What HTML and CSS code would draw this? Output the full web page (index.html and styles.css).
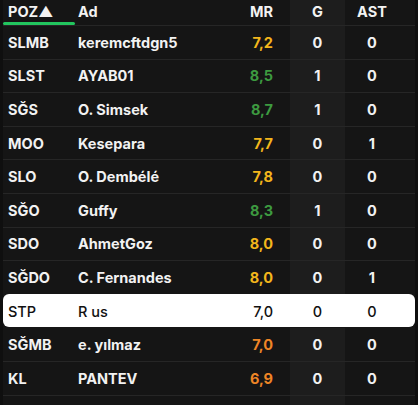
FILE: index.html
```html
<!DOCTYPE html>
<html lang="tr">
<head>
<meta charset="utf-8">
<link rel="stylesheet" href="styles.css">
</head>
<body>
<div class="table">
  <div class="row head">
    <div class="c poz"><span class="sorted">POZ▲</span></div>
    <div class="c ad">Ad</div>
    <div class="c mr">MR</div>
    <div class="c g">G</div>
    <div class="c ast">AST</div>
  </div>
  <div class="row"><div class="c poz">SLMB</div><div class="c ad">keremcftdgn5</div><div class="c mr yellow">7,2</div><div class="c g">0</div><div class="c ast">0</div></div>
  <div class="row"><div class="c poz">SLST</div><div class="c ad">AYAB01</div><div class="c mr green">8,5</div><div class="c g">1</div><div class="c ast">0</div></div>
  <div class="row"><div class="c poz">SĞS</div><div class="c ad">O. Simsek</div><div class="c mr green">8,7</div><div class="c g">1</div><div class="c ast">0</div></div>
  <div class="row"><div class="c poz">MOO</div><div class="c ad">Kesepara</div><div class="c mr yellow">7,7</div><div class="c g">0</div><div class="c ast">1</div></div>
  <div class="row"><div class="c poz">SLO</div><div class="c ad">O. Dembélé</div><div class="c mr yellow">7,8</div><div class="c g">0</div><div class="c ast">0</div></div>
  <div class="row"><div class="c poz">SĞO</div><div class="c ad">Guffy</div><div class="c mr green">8,3</div><div class="c g">1</div><div class="c ast">0</div></div>
  <div class="row"><div class="c poz">SDO</div><div class="c ad">AhmetGoz</div><div class="c mr yellow">8,0</div><div class="c g">0</div><div class="c ast">0</div></div>
  <div class="row"><div class="c poz">SĞDO</div><div class="c ad">C. Fernandes</div><div class="c mr yellow">8,0</div><div class="c g">0</div><div class="c ast">1</div></div>
  <div class="row me"><div class="c poz">STP</div><div class="c ad">R us</div><div class="c mr">7,0</div><div class="c g">0</div><div class="c ast">0</div></div>
  <div class="row"><div class="c poz">SĞMB</div><div class="c ad">e. yılmaz</div><div class="c mr orange">7,0</div><div class="c g">0</div><div class="c ast">0</div></div>
  <div class="row"><div class="c poz">KL</div><div class="c ad">PANTEV</div><div class="c mr orange">6,9</div><div class="c g">0</div><div class="c ast">0</div></div>
  <div class="row last"><div class="c poz"></div><div class="c ad"></div><div class="c mr"></div><div class="c g"></div><div class="c ast"></div></div>
</div>
</body>
</html>
```
FILE: styles.css
```css
html, body {
  margin: 0;
  padding: 0;
  background: #0f0f0f;
  height: 405px;
  overflow: hidden;
}
body {
  font-family: Inter, "Liberation Sans", sans-serif;
  font-weight: 700;
  font-size: 14.5px;
  color: #f2f2f2;
}
.table {
  margin-left: 3px;
  width: 412px;
  background: #151515;
}
.row {
  display: grid;
  grid-template-columns: 70px 150px 67px 55px 70px;
  height: 33.6px;
  border-top: 1px solid #262626;
  box-sizing: border-box;
}
.row.head {
  height: 25px;
  border-top: none;
}
.row.last { height: 10px; }
.c {
  display: flex;
  align-items: center;
  white-space: nowrap;
}
.poz, .ad { padding-left: 5px; }
.mr { justify-content: flex-end; padding-right: 17px; }
.g { justify-content: center; background: #1d1d1d; }
.ast { justify-content: center; padding-right: 16px; }
.head .c { padding-bottom: 3px; }
.head .poz {
  position: relative;
}
.head .poz::after {
  content: "";
  position: absolute;
  left: 0;
  right: -2px;
  bottom: 0;
  height: 3px;
  border-radius: 2px;
  background: #22c55e;
}
.yellow { color: #f3b61c; }
.green { color: #3d9a40; }
.orange { color: #ee8526; }
.row.me {
  background: #ffffff;
  color: #111111;
  border-radius: 6px;
  border-top-color: transparent;
  font-weight: 500;
}
.row.me .g { background: transparent; }
.row.me + .row { border-top-color: transparent; }
```
